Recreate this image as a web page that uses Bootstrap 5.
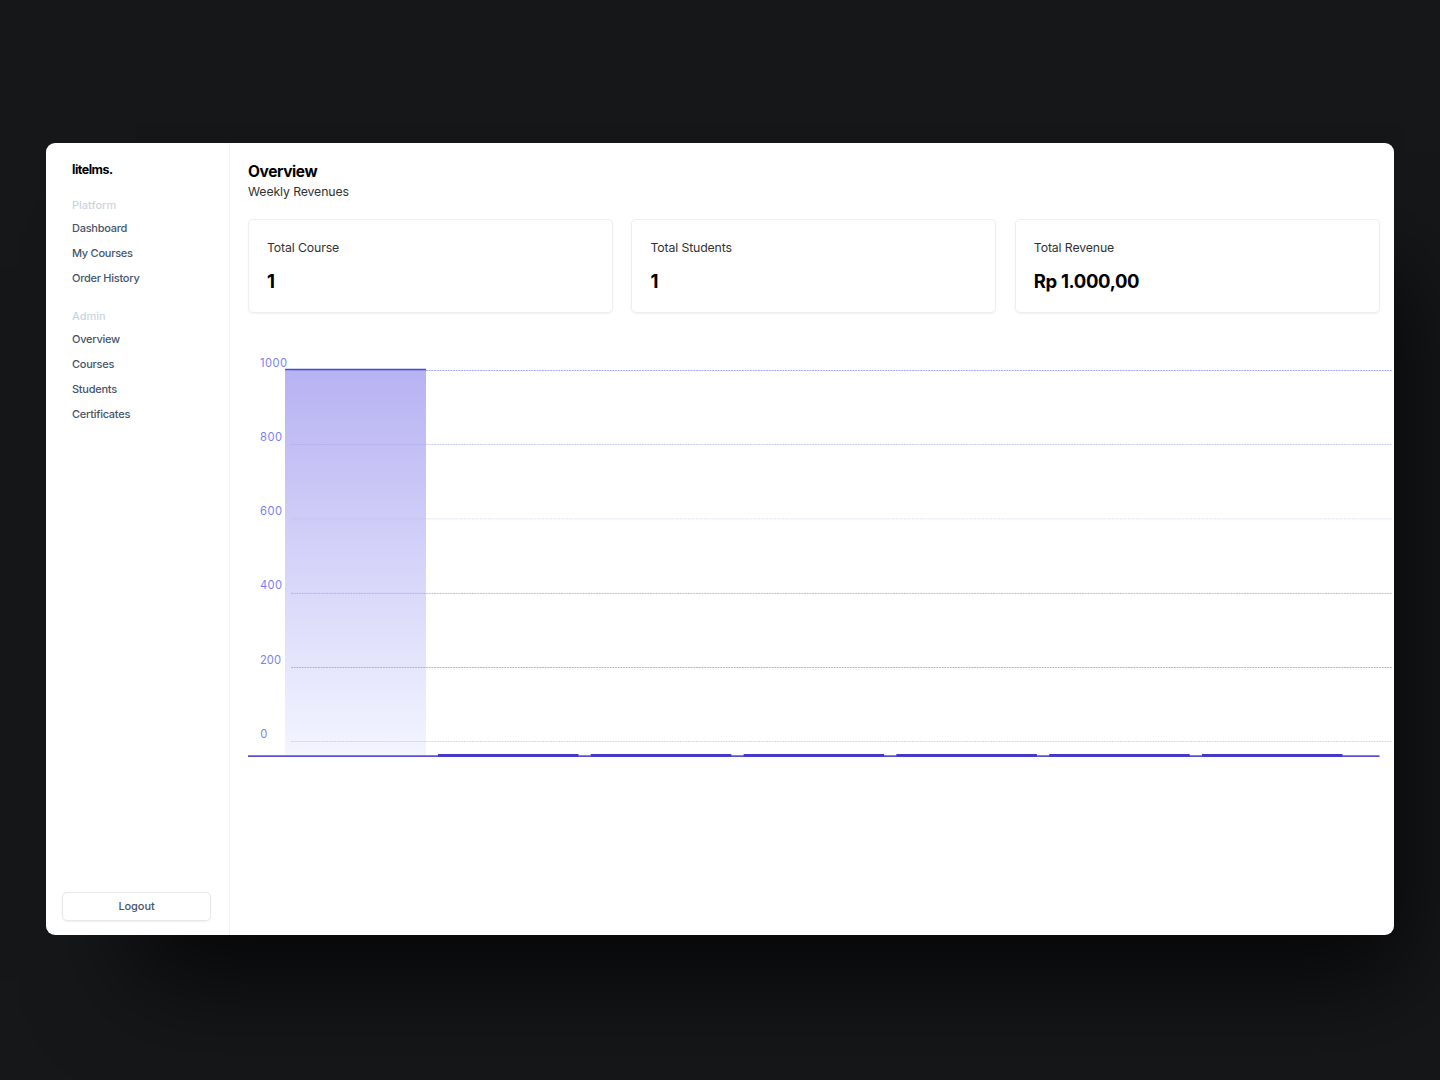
<!DOCTYPE html>
<html lang="en">
<head>
<meta charset="utf-8">
<meta name="viewport" content="width=device-width, initial-scale=1">
<title>litelms. – Overview</title>
<link href="https://cdn.jsdelivr.net/npm/bootstrap@5.3.0/dist/css/bootstrap.min.css" rel="stylesheet">
<style>
body{background:#161719;font-family:Inter,"Liberation Sans",sans-serif;height:1080px;overflow:hidden;padding:143px 46px 145px;color:#000}
.app-window{height:792px;background:#fff;border-radius:9px;box-shadow:50px 84px 96px -40px rgba(0,0,0,.74)}
.side-nav{width:184px;border-right:1px solid #f1f2f4;padding:19px 18px 14px 16px}
.brand{font-size:12.5px;line-height:16px;font-weight:700;letter-spacing:-.5px;padding-left:10px;margin-bottom:19px}
.group-title{font-size:11px;line-height:16px;color:#cbd5e1;font-weight:500;padding-left:10px;margin-bottom:3px}
.side-nav .nav-link{font-size:11px;line-height:24.8px;padding:0 0 0 10px;color:#475569;font-weight:500;letter-spacing:-.26px}
.side-nav .nav{margin-bottom:18px}
.btn-logout{height:29px;font-size:11px;line-height:27px;font-weight:500;color:#475569;border:1px solid #e5e7eb;border-radius:5px;box-shadow:0 1px 2px rgba(0,0,0,.06);padding:0;letter-spacing:-.1px}
.page-main{padding:19px 0 0 18px;min-width:0}
.page-title{font-size:15.5px;line-height:20px;font-weight:700;letter-spacing:-.4px;margin:0}
.page-sub{font-size:12.3px;line-height:20px;color:#333;margin:0 0 17px;letter-spacing:-.12px}
.stat-row{display:grid;grid-template-columns:repeat(3,1fr);gap:18.4px;margin-right:14.2px}
.stat-card{height:94px;border:1px solid #eceef1;border-radius:5px;box-shadow:0 1px 2px rgba(0,0,0,.06);padding:19px 18px 0}
.stat-label{font-size:12.3px;line-height:18px;color:#333;letter-spacing:-.13px}
.stat-value{font-size:18.5px;line-height:24px;font-weight:700;letter-spacing:-.35px;margin-top:12px}
.chart{display:block;margin-top:37px;font-size:11.2px}
</style>
</head>
<body>
<div class="app-window d-flex overflow-visible">
  <aside class="side-nav d-flex flex-column flex-shrink-0">
    <div class="brand">litelms.</div>
    <div class="group-title">Platform</div>
    <nav class="nav flex-column">
      <a class="nav-link" href="#">Dashboard</a>
      <a class="nav-link" href="#">My Courses</a>
      <a class="nav-link" href="#">Order History</a>
    </nav>
    <div class="group-title">Admin</div>
    <nav class="nav flex-column">
      <a class="nav-link" href="#">Overview</a>
      <a class="nav-link" href="#">Courses</a>
      <a class="nav-link" href="#">Students</a>
      <a class="nav-link" href="#">Certificates</a>
    </nav>
    <button class="btn btn-logout w-100 mt-auto" type="button">Logout</button>
  </aside>
  <main class="page-main flex-grow-1">
    <h1 class="page-title">Overview</h1>
    <p class="page-sub">Weekly Revenues</p>
    <section class="stat-row">
      <div class="stat-card"><div class="stat-label">Total Course</div><div class="stat-value">1</div></div>
      <div class="stat-card"><div class="stat-label">Total Students</div><div class="stat-value">1</div></div>
      <div class="stat-card"><div class="stat-label">Total Revenue</div><div class="stat-value">Rp 1.000,00</div></div>
    </section>
    <svg class="chart" width="1146" height="420" viewBox="248 350 1146 420" role="img" aria-label="Weekly revenues">
      <defs><linearGradient id="fade" x1="0" y1="0" x2="0" y2="1"><stop offset="0" stop-color="#b7b2f2"/><stop offset="1" stop-color="#f3f5ff"/></linearGradient></defs>
      <rect x="285" y="369" width="141" height="387" fill="url(#fade)"/>
      <g stroke-width="1" stroke-dasharray="1.9 .8" fill="none">
        <path d="M291 370.5H1392" stroke="#a0acfa"/>
        <path d="M291 444.5H1392" stroke="#a5a8f5" stroke-opacity=".6"/>
        <path d="M291 518.9H1392" stroke="#b0b2ee" stroke-opacity=".4"/>
        <path d="M291 593.4H1392" stroke="#a5a8f5" stroke-opacity=".8"/>
        <path d="M291 667.5H1392" stroke="#a5acf6" stroke-opacity=".95"/>
        <path d="M291 741.5H1392" stroke="#b4bafa" stroke-opacity=".6"/>
      </g>
      <path d="M285 369.5H426" stroke="#4f46d5" stroke-width="1.6"/>
      <path d="M248 756.1H1379.5" stroke="#5a51d0" stroke-width="1.8"/>
      <path d="M438 755.3H578.5M590.8 755.3H731.3M743.6 755.3H884.1M896.4 755.3H1036.9M1049.2 755.3H1189.7M1202 755.3H1342.5" stroke="#4338ca" stroke-width="2.8"/>
      <g fill="#7b7ff0">
        <text x="260" y="366.6" textLength="27">1000</text><text x="260" y="440.6" textLength="22">800</text><text x="260" y="514.8" textLength="22">600</text><text x="260" y="589" textLength="22">400</text><text x="260" y="663.6" textLength="21">200</text><text x="260.3" y="737.6">0</text>
      </g>
    </svg>
  </main>
</div>
<script src="https://cdn.jsdelivr.net/npm/bootstrap@5.3.0/dist/js/bootstrap.bundle.min.js"></script>
</body>
</html>
